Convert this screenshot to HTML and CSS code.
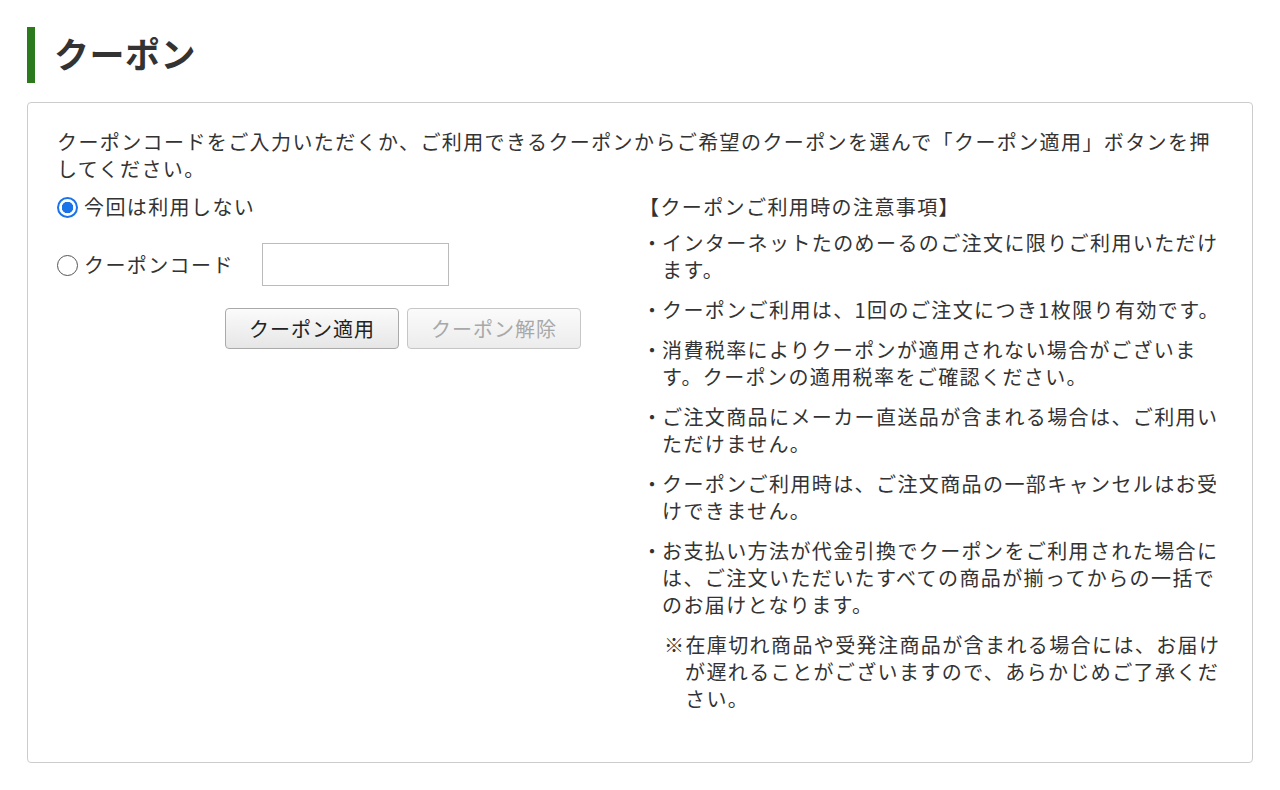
FILE: index.html
```html
<!DOCTYPE html>
<html lang="ja">
<head>
    <meta charset="utf-8">
    <title>クーポン</title>
    <link rel="stylesheet" href="styles.css">
</head>
<body>
    <h1 class="page-title">クーポン</h1>
    <div class="coupon-box">
        <p class="intro">クーポンコードをご入力いただくか、ご利用できるクーポンからご希望のクーポンを選んで「クーポン適用」ボタンを押してください。</p>
        <div class="coupon-cols">
            <div class="coupon-form">
                <label class="radio-row">
                    <input type="radio" name="coupon" checked>
                    <span>今回は利用しない</span>
                </label>
                <div class="radio-row code-row">
                    <label class="radio-label">
                        <input type="radio" name="coupon">
                        <span>クーポンコード</span>
                    </label>
                    <input type="text" class="code-input">
                </div>
                <div class="btn-row">
                    <button class="btn">クーポン適用</button>
                    <button class="btn" disabled>クーポン解除</button>
                </div>
            </div>
            <div class="notes">
                <p class="notes-title">【クーポンご利用時の注意事項】</p>
                <ul class="note-list">
                    <li>インターネットたのめーるのご注文に限りご利用いただけます。</li>
                    <li>クーポンご利用は、1回のご注文につき1枚限り有効です。</li>
                    <li>消費税率によりクーポンが適用されない場合がございます。クーポンの適用税率をご確認ください。</li>
                    <li>ご注文商品にメーカー直送品が含まれる場合は、ご利用いただけません。</li>
                    <li>クーポンご利用時は、ご注文商品の一部キャンセルはお受けできません。</li>
                    <li>お支払い方法が代金引換でクーポンをご利用された場合には、ご注文いただいたすべての商品が揃ってからの一括でのお届けとなります。</li>
                </ul>
                <p class="note-sub">※在庫切れ商品や受発注商品が含まれる場合には、お届けが遅れることがございますので、あらかじめご了承ください。</p>
            </div>
        </div>
    </div>
</body>
</html>
```

FILE: styles.css
```css
body {
    margin: 0;
    padding: 27px 27px 0 27px;
    background-color: white;
    color: #333;
    font-family: "Noto Sans CJK JP", "Noto Sans", sans-serif;
    font-size: 20px;
    letter-spacing: 1.4px;
}
p, ul {
    margin: 0;
}
.page-title {
    margin: 0 0 19px 0;
    height: 56px;
    line-height: 52px;
    border-left: 8px solid #2b7a1e;
    padding-left: 19px;
    font-size: 35px;
    font-weight: bold;
    letter-spacing: 0.5px;
    color: #333;
}
.coupon-box {
    border: 1px solid #ccc;
    border-radius: 4px;
    padding: 25px 29px 48px 29px;
    min-height: 586px;
}
.intro {
    line-height: 27px;
    margin-bottom: 11px;
}
.coupon-cols {
    display: grid;
    grid-template-columns: 524px 1fr;
    column-gap: 64px;
}
.radio-row {
    display: flex;
    align-items: center;
    line-height: 27px;
}
.radio-label {
    display: flex;
    align-items: center;
}
.code-row {
    margin-top: 23px;
}
input[type="radio"] {
    appearance: none;
    width: 21px;
    height: 21px;
    margin: 0 6px 0 0;
    border: 1.5px solid #555;
    border-radius: 50%;
    background: white;
    position: relative;
    top: 1px;
}
input[type="radio"]:checked {
    border: 2px solid #1a73e8;
    background: radial-gradient(circle, #1a73e8 0 5.5px, white 6px);
}
.code-input {
    box-sizing: border-box;
    margin-left: 28px;
    width: 187px;
    height: 43px;
    border: 1px solid #bbb;
    padding: 0;
    font-size: 18px;
}
.btn-row {
    display: flex;
    justify-content: flex-end;
    gap: 8px;
    margin-top: 22px;
}
.btn {
    width: 174px;
    height: 41px;
    font-family: inherit;
    font-size: 20px;
    letter-spacing: 1px;
    color: #222;
    background: linear-gradient(#fbfbfb, #e6e6e6);
    border: 1px solid #aaa;
    border-radius: 4px;
    padding: 0;
}
.btn:disabled {
    color: #a8a8a8;
    border-color: #c6c6c6;
    background: linear-gradient(#fbfbfb, #ececec);
}
.notes {
    line-height: 27px;
}
.notes-title {
    margin-left: -6px;
    margin-bottom: 9px;
}
.note-list {
    list-style: none;
    padding: 0;
}
.note-list li {
    position: relative;
    padding-left: 17px;
    margin-bottom: 13px;
}
.note-list li::before {
    content: "・";
    position: absolute;
    left: -3px;
}
.note-sub {
    padding-left: 40px;
    text-indent: -21px;
}
```
